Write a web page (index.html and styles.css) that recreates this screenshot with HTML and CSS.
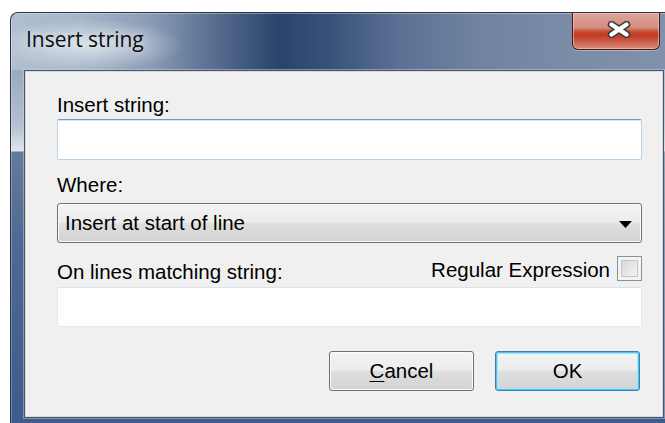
FILE: index.html
```html
<!DOCTYPE html>
<html lang="en">
<head>
<meta charset="utf-8">
<title>Insert string</title>
<link rel="stylesheet" href="styles.css">
</head>
<body>
<div class="window">
  <div class="titlebar">
    <span class="title">Insert string</span>
    <button class="close" type="button" aria-label="Close">
      <svg width="24" height="17" viewBox="0 0 24 17" aria-hidden="true">
        <g stroke-linecap="round">
          <path d="M4.5 3.5 L19.5 13.5 M19.5 3.5 L4.5 13.5" stroke="#3b3b3b" stroke-width="7.5"/>
          <path d="M4.5 3.5 L19.5 13.5 M19.5 3.5 L4.5 13.5" stroke="#ffffff" stroke-width="4.5"/>
        </g>
      </svg>
    </button>
  </div>
  <div class="frame">
    <form class="client">
      <label class="label" for="insert-text">Insert string:</label>
      <input id="insert-text" class="textbox focused" type="text">

      <span class="label where">Where:</span>
      <div class="combo">
        <span>Insert at start of line</span>
        <svg class="arrow" width="13" height="7" viewBox="0 0 13 7" aria-hidden="true">
          <polygon points="0,0 13,0 6.5,7" fill="#000"/>
        </svg>
      </div>

      <div class="match-row">
        <span class="label match-label">On lines matching string:</span>
        <label class="regex">
          <span class="regex-text">Regular Expression</span>
          <span class="check"><span class="check-inner"></span></span>
        </label>
      </div>
      <input class="textbox plain" type="text">

      <div class="buttons">
        <button class="btn" type="button"><u>C</u>ancel</button>
        <button class="btn default" type="button">OK</button>
      </div>
    </form>
  </div>
</div>
</body>
</html>
```

FILE: styles.css
```css
* {
  box-sizing: border-box;
}

html,
body {
  margin: 0;
  height: 100%;
}

body {
  background: #ffffff;
  overflow: hidden;
  font-family: "Liberation Sans", Arial, sans-serif;
}

/* Aero window frame */
.window {
  width: 663px;
  margin: 12px 0 0 10px;
  border: 1px solid #26334a;
  border-bottom: none;
  border-radius: 8px 8px 0 0;
  overflow: hidden;
  background: #3d5b8b;
}

.titlebar {
  height: 57px;
  display: flex;
  align-items: flex-start;
  padding-left: 15px;
  box-shadow: inset 0 1px 0 rgba(255, 255, 255, 0.35), inset 1px 0 0 rgba(255, 255, 255, 0.3);
  background:
    radial-gradient(ellipse 95px 26px at 78px 32px, rgba(235, 240, 246, 0.75), rgba(235, 240, 246, 0)),
    linear-gradient(to right,
      #b1bfcf 0,
      #a6b5c8 70px,
      #8a9cb5 140px,
      #566d90 205px,
      #2b426a 268px,
      #3a5279 320px,
      #5c7194 390px,
      #7083a0 470px,
      #7b8ca7 560px,
      #8291ab 663px);
}

.title {
  margin-top: 12px;
  font-family: "Open Sans", "Noto Sans", sans-serif;
  font-size: 21px;
  line-height: 28px;
  color: #0d0d0d;
  text-shadow: 0 0 8px rgba(255, 255, 255, 0.7);
}

.close {
  margin: -1px 12px 0 auto;
  width: 88px;
  height: 38px;
  padding: 0 0 3px 6px;
  display: flex;
  align-items: center;
  justify-content: center;
  border: 1px solid #3b1d1a;
  border-top-color: #4a2a26;
  border-radius: 0 0 6px 6px;
  box-shadow:
    inset 0 0 0 1px rgba(255, 210, 200, 0.55),
    0 1px 0 rgba(255, 255, 255, 0.35);
  background: linear-gradient(to bottom,
    #dca59b 0,
    #d38f82 40%,
    #c64a33 52%,
    #c43a22 62%,
    #cc6450 82%,
    #db8d7c 100%);
}

.frame {
  padding: 0 8px 8px 13px;
  box-shadow: inset 1px 0 0 rgba(255, 255, 255, 0.25);
  background: linear-gradient(to bottom,
    #9aabc0 0,
    #b3c0cf 55px,
    #dfe5ec 81px,
    #657b9d 82px,
    #4f6993 170px,
    #3d5b8b 100%);
}

/* dialog client area */
.client {
  width: 640px;
  height: 348px;
  margin: 0;
  padding: 22px 21px 0 32px;
  display: flex;
  flex-direction: column;
  background: #f0f0f0;
  border: 1px solid #4a5260;
  box-shadow: 0 0 0 1px rgba(205, 218, 235, 0.45), inset 0 0 0 1px #d8dadd;
}

.label {
  display: block;
  height: 24px;
  font-size: 20.5px;
  line-height: 24px;
  color: #000;
  white-space: nowrap;
}

.textbox {
  display: block;
  width: 100%;
  margin: 0;
  padding: 0 6px;
  background: #ffffff;
  border-radius: 2px;
  font: inherit;
  outline: none;
}

.textbox.focused {
  height: 41px;
  margin-top: 2px;
  border: 1px solid #b5d2ea;
  border-top-color: #6f9dcb;
  box-shadow: inset 0 1px 0 #d3e4f3;
}

.textbox.plain {
  height: 40px;
  margin-top: 3px;
  border: 1px solid #e4e8ed;
  border-top-color: #dde2e8;
}

.where {
  margin-top: 13px;
}

/* shared Windows 7 push-button look */
.combo,
.btn {
  border: 1px solid #707070;
  border-radius: 3px;
  box-shadow: inset 0 0 0 1px #fbfbfb;
  background: linear-gradient(to bottom,
    #f3f3f3 0,
    #ececec 48%,
    #dedede 52%,
    #d3d3d3 100%);
}

.combo {
  height: 40px;
  margin-top: 6px;
  padding: 0 9px 0 7px;
  display: flex;
  align-items: center;
  justify-content: space-between;
  font-size: 20.5px;
  line-height: 24px;
  color: #000;
}

.arrow {
  display: block;
  margin-top: 2px;
}

.match-row {
  height: 28px;
  margin-top: 13px;
  display: flex;
  justify-content: space-between;
  align-items: flex-start;
}

.match-label {
  margin-top: 4px;
}

.regex {
  display: flex;
  align-items: flex-start;
}

.regex-text {
  margin-top: 2px;
  font-size: 20.5px;
  line-height: 24px;
  color: #000;
}

.check {
  width: 25px;
  height: 25px;
  margin-left: 7px;
  padding: 3px;
  border: 1px solid #8e8f8f;
  background: #f4f4f4;
}

.check-inner {
  display: block;
  width: 100%;
  height: 100%;
  border: 1px solid #c2c5ca;
  background: linear-gradient(135deg, #d4d7db 0, #e6e7e9 55%, #f3f3f3 100%);
}

.buttons {
  margin-top: 24px;
  padding-right: 2px;
  display: flex;
  justify-content: flex-end;
  gap: 21px;
}

.btn {
  width: 145px;
  height: 40px;
  padding: 0;
  font-family: "Liberation Sans", Arial, sans-serif;
  font-size: 20.5px;
  line-height: 24px;
  color: #000;
}

.btn u {
  text-decoration-thickness: 1px;
  text-underline-offset: 3px;
}

.btn.default {
  border-color: #3c7fb1;
  box-shadow: inset 0 0 0 1px #4ec6f2, inset 0 0 0 2px #a9e2f7;
}
```
